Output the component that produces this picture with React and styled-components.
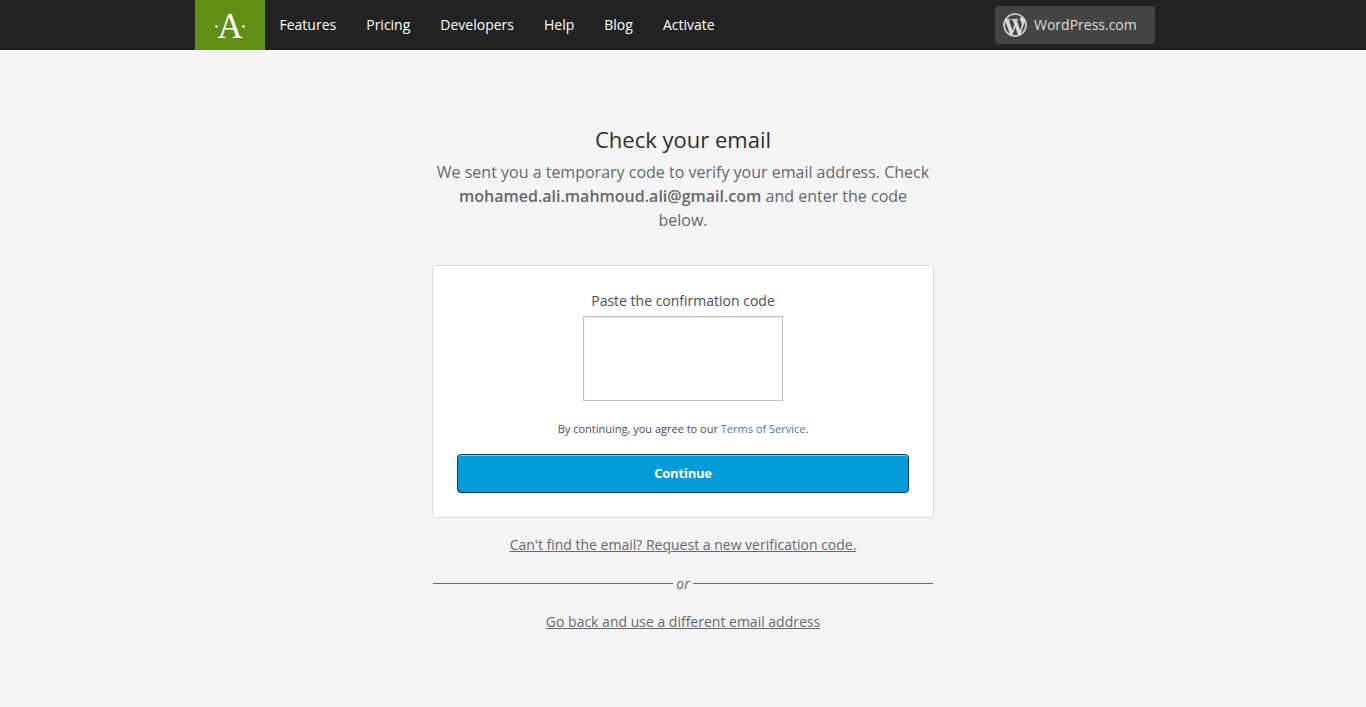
import React from "react";
import styled, { createGlobalStyle } from "styled-components";
import { FaWordpressSimple } from "react-icons/fa";

const GlobalStyle = createGlobalStyle`
  * { box-sizing: border-box; }
  body {
    margin: 0;
    background: #f5f5f5;
    font-family: "Open Sans", "Noto Sans", sans-serif;
    font-size: 14px;
    color: #4e4e55;
  }
`;

const Header = styled.header`
  height: 50px;
  background: #222;
`;

const HeaderInner = styled.div`
  width: 976px;
  height: 50px;
  margin: 0 auto;
  padding-right: 16px;
  display: flex;
  align-items: center;
`;

const Logo = styled.a`
  width: 70px;
  height: 50px;
  background: #5f8f14;
  svg { display: block; }
`;

const Nav = styled.nav`
  display: flex;
  gap: 30px;
  margin-left: 14.5px;
  flex: 1;
`;

const NavLink = styled.a`
  color: #fff;
  font-size: 14px;
  line-height: 50px;
`;

const WordPressButton = styled.a`
  width: 160px;
  height: 38px;
  padding-left: 8px;
  border-radius: 4px;
  background: #444;
  color: #ddd;
  display: flex;
  align-items: center;
  gap: 7px;
  font-size: 14px;
  line-height: 38px;
`;

const WordPressMark = styled(FaWordpressSimple)`
  width: 24px;
  height: 24px;
  border-radius: 50%;
  stroke: currentColor;
  stroke-width: 14px;
`;

const Main = styled.main`
  width: 502px;
  margin: 0 auto;
  padding-top: 73px;
  text-align: center;
`;

const Title = styled.h1`
  margin: 0;
  font-size: 22px;
  font-weight: 400;
  line-height: 32px;
  color: #2e2e33;
`;

const Intro = styled.p`
  margin: 5px 0 33px;
  padding: 0 1px;
  font-size: 16px;
  line-height: 24px;
  color: #67676f;
  strong { font-weight: 600; }
`;

const Card = styled.form`
  height: 253px;
  padding: 24px;
  background: #fff;
  border: 1px solid #dcdcde;
  border-radius: 3px;
  display: flex;
  flex-direction: column;
  align-items: center;
`;

const Label = styled.label`
  font-size: 14px;
  line-height: 22px;
`;

const CodeInput = styled.input`
  width: 200px;
  height: 85px;
  flex-shrink: 0;
  margin-top: 4px;
  padding: 0;
  border: 1px solid #c2c2c2;
  border-radius: 0;
  outline: none;
  background: #fff;
  box-shadow: inset 0 1px 2px rgba(0, 0, 0, 0.1);
`;

const Terms = styled.p`
  margin: 18px 0 15px;
  font-size: 11px;
  line-height: 20px;
  a { color: #4479b5; }
`;

const Submit = styled.button`
  width: 452px;
  height: 39px;
  flex-shrink: 0;
  padding: 0 0 2px;
  border: 1px solid #053e58;
  border-radius: 4px;
  background: #039cd9;
  box-shadow: inset 0 1px 0 #8cd0ee, 0 1px 0 rgba(0, 0, 0, 0.08);
  color: #fff;
  font-family: inherit;
  font-size: 13px;
  font-weight: 700;
  letter-spacing: -0.2px;
`;

const TextLink = styled.a`
  display: block;
  font-size: 14px;
  line-height: 20px;
  color: #67676f;
  text-decoration: underline;
`;

const Footer = styled.div`
  padding: 17px 1px 0;
`;

const Divider = styled.div`
  display: flex;
  align-items: flex-start;
  margin: 19px 0 18px;
  font-size: 14px;
  font-style: italic;
  line-height: 20px;
  color: #67676f;
`;

const Rule = styled.span`
  flex: 1;
  height: 1px;
  margin-top: 9px;
  background: #6b6b70;
`;

const Or = styled.span`
  width: 20px;
`;

const NAV_ITEMS = ["Features", "Pricing", "Developers", "Help", "Blog", "Activate"];

function AkismetLogo() {
  return (
    <svg width="70" height="50" viewBox="0 0 70 50" fill="#fff">
      <circle cx="21.5" cy="26.5" r="1.4" fillOpacity="0.85" />
      <text x="35.2" y="37.5" textAnchor="middle" fontFamily="Liberation Serif, serif" fontSize="35">A</text>
      <circle cx="48.5" cy="26.5" r="1.4" fillOpacity="0.85" />
    </svg>
  );
}

export default function App() {
  return (
    <>
      <GlobalStyle />
      <Header>
        <HeaderInner>
          <Logo><AkismetLogo /></Logo>
          <Nav>
            {NAV_ITEMS.map((item) => <NavLink key={item}>{item}</NavLink>)}
          </Nav>
          <WordPressButton>
            <WordPressMark />
            WordPress.com
          </WordPressButton>
        </HeaderInner>
      </Header>
      <Main>
        <Title>Check your email</Title>
        <Intro>
          We sent you a temporary code to verify your email address. Check{" "}
          <strong>mohamed.ali.mahmoud.ali@gmail.com</strong> and enter the code below.
        </Intro>
        <Card>
          <Label htmlFor="code">Paste the confirmation code</Label>
          <CodeInput id="code" />
          <Terms>By continuing, you agree to our <a>Terms of Service</a>.</Terms>
          <Submit type="button">Continue</Submit>
        </Card>
        <Footer>
          <TextLink>Can't find the email? Request a new verification code.</TextLink>
          <Divider><Rule /><Or>or</Or><Rule /></Divider>
          <TextLink>Go back and use a different email address</TextLink>
        </Footer>
      </Main>
    </>
  );
}
